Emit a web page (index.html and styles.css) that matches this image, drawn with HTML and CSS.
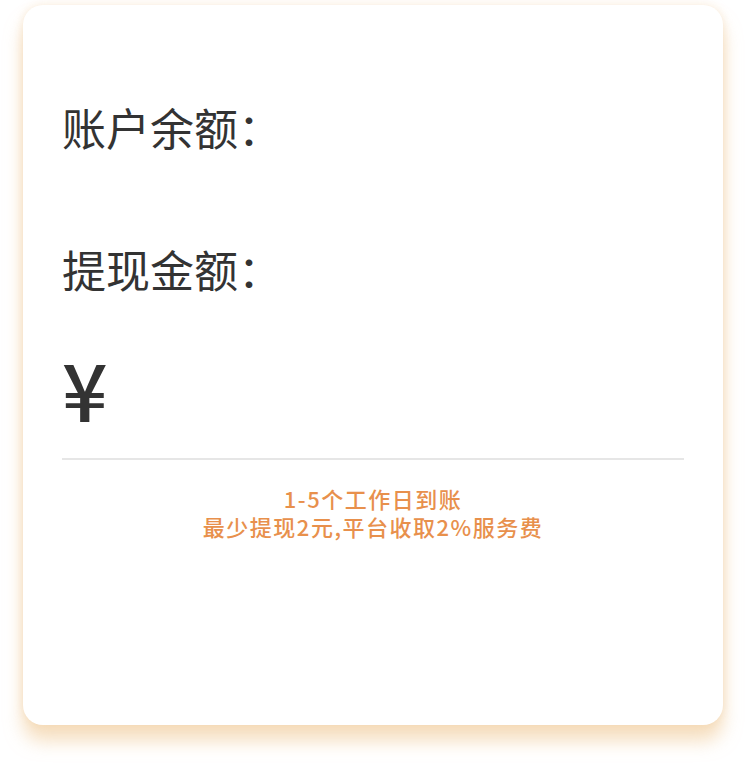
FILE: index.html
```html
<!DOCTYPE html>
<html lang="zh">
<head>
<meta charset="utf-8">
<link rel="stylesheet" href="styles.css">
</head>
<body>
<div class="card">
  <div class="label balance">账户余额：</div>
  <div class="label amount">提现金额：</div>
  <div class="input-row"><span class="yen">¥</span></div>
  <div class="divider"></div>
  <div class="notes">
    <p>1-5个工作日到账</p>
    <p>最少提现2元,平台收取2%服务费</p>
  </div>
</div>
</body>
</html>
```
FILE: styles.css
```css
html, body {
  margin: 0;
  padding: 0;
  background: #ffffff;
}
body {
  font-family: "Noto Sans CJK SC", "Noto Sans", sans-serif;
  width: 746px;
  height: 772px;
  overflow: hidden;
}
.card {
  position: relative;
  margin: 5px 23px 0 23px;
  height: 720px;
  background: #ffffff;
  border-radius: 20px;
  box-shadow: 0 16px 18px rgba(238, 196, 140, 0.55), 0 0 10px rgba(240, 205, 160, 0.4);
  padding: 92px 39px 0 39px;
  box-sizing: border-box;
}
.card::before {
  content: "";
  position: absolute;
  left: 0;
  right: 0;
  top: 20px;
  bottom: -7px;
  background: #f3ecdf;
  border-radius: 20px;
  z-index: -1;
}
.label {
  font-size: 44px;
  line-height: 60px;
  color: #333333;
  font-weight: 400;
}
.amount {
  margin-top: 82px;
}
.input-row {
  margin-top: 53px;
  height: 70px;
  display: flex;
  align-items: center;
}
.yen {
  font-size: 80px;
  line-height: 70px;
  color: #333333;
  font-weight: 500;
}
.divider {
  margin-top: 36px;
  height: 2px;
  background: #e6e6e6;
}
.notes {
  margin-top: 24px;
  text-align: center;
  color: #e8904c;
  font-size: 22px;
  letter-spacing: 1.5px;
  font-weight: 500;
  line-height: 28px;
}
.notes p {
  margin: 0;
}
```
